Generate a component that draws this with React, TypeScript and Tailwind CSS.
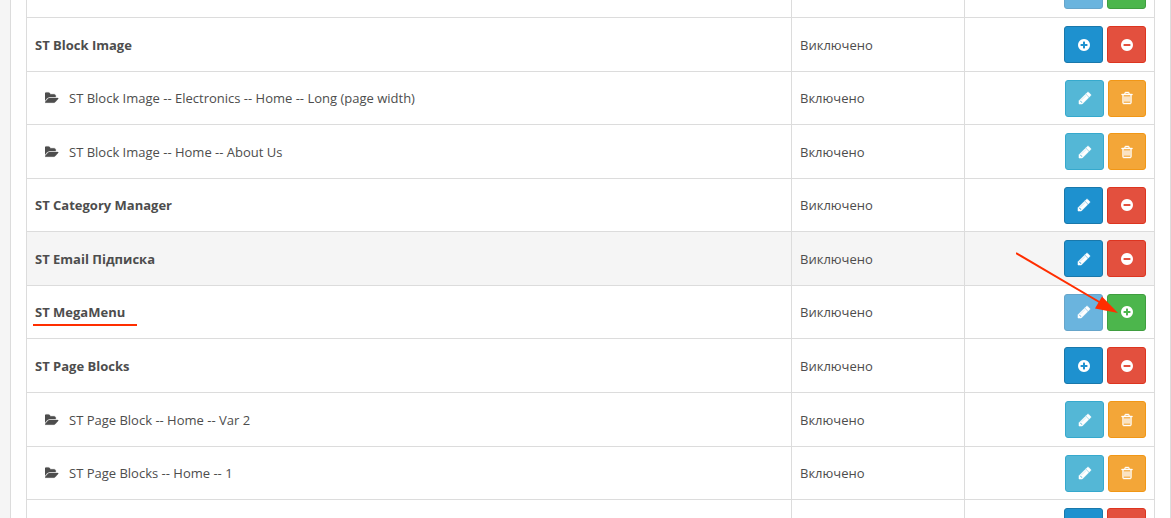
import React from "react";

const PLUS =
  "M1344 960v-128q0-26-19-45t-45-19h-256v-256q0-26-19-45t-45-19h-128q-26 0-45 19t-19 45v256h-256q-26 0-45 19t-19 45v128q0 26 19 45t45 19h256v256q0 26 19 45t45 19h128q26 0 45-19t19-45v-256h256q26 0 45-19t19-45zm320-64q0 209-103 385.5t-279.5 279.5-385.5 103-385.5-103-279.5-279.5-103-385.5 103-385.5 279.5-279.5 385.5-103 385.5 103 279.5 279.5 103 385.5z";
const MINUS =
  "M1344 960v-128q0-26-19-45t-45-19h-768q-26 0-45 19t-19 45v128q0 26 19 45t45 19h768q26 0 45-19t19-45zm320-64q0 209-103 385.5t-279.5 279.5-385.5 103-385.5-103-279.5-279.5-103-385.5 103-385.5 279.5-279.5 385.5-103 385.5 103 279.5 279.5 103 385.5z";
const PENCIL =
  "M491 1536l91-91-235-235-91 91v107h128v128h107zm523-928q0-22-22-22-10 0-17 7l-542 542q-7 7-7 17 0 22 22 22 10 0 17-7l542-542q7-7 7-17zm-54-192l416 416-832 832h-416v-416zm683 96q0 53-37 90l-166 166-416-416 166-165q36-38 90-38 53 0 91 38l235 234q37 39 37 91z";
const TRASH =
  "M704 736v576q0 14-9 23t-23 9h-64q-14 0-23-9t-9-23v-576q0-14 9-23t23-9h64q14 0 23 9t9 23zm256 0v576q0 14-9 23t-23 9h-64q-14 0-23-9t-9-23v-576q0-14 9-23t23-9h64q14 0 23 9t9 23zm256 0v576q0 14-9 23t-23 9h-64q-14 0-23-9t-9-23v-576q0-14 9-23t23-9h64q14 0 23 9t9 23zm128 724v-948h-896v948q0 22 7 40.5t14.5 27 10.5 8.5h832q3 0 10.5-8.5t14.5-27 7-40.5zm-672-1076h448l-48-117q-7-9-17-11h-317q-10 2-17 11zm928 32v64q0 14-9 23t-23 9h-96v948q0 83-47 143.5t-113 60.5h-832q-66 0-113-58.5t-47-141.5v-952h-96q-14 0-23-9t-9-23v-64q0-14 9-23t23-9h309l70-167q15-37 54-63t79-26h320q40 0 79 26t54 63l70 167h309q14 0 23 9t9 23z";
const FOLDER =
  "M1815 952q0 31-31 66l-336 396q-43 51-120.5 86.5t-143.5 35.5h-1088q-34 0-60.5-13t-26.5-43q0-31 31-66l336-396q43-51 120.5-86.5t143.5-35.5h1088q34 0 60.5 13t26.5 43zm-343-344v160h-832q-94 0-197 47.5t-164 119.5l-337 396-5 6q0-4-.5-12.5t-.5-12.5v-960q0-92 66-158t158-66h320q92 0 158 66t66 158v32h544q92 0 158 66t66 158z";

const KINDS = {
  add: { label: "Додати", path: PLUS, weight: 0, style: "w-[39px] bg-[#1e91cf] border-[#1978ab]" },
  edit: { label: "Редагувати", path: PENCIL, weight: 70, style: "w-[39px] bg-[#1e91cf] border-[#1978ab]" },
  editOff: { label: "Редагувати", path: PENCIL, weight: 70, style: "w-[39px] bg-[#6ab4de] border-[#67a5ca]" },
  editModule: { label: "Редагувати", path: PENCIL, weight: 70, style: "w-[39px] bg-[#54b7d6] border-[#36a9cd]" },
  uninstall: { label: "Вимкнути", path: MINUS, weight: 0, style: "w-[39px] bg-[#e3503e] border-[#dd3520]" },
  install: { label: "Увімкнути", path: PLUS, weight: 0, style: "w-[39px] bg-[#4cb64c] border-[#409e40]" },
  remove: { label: "Видалити", path: TRASH, weight: 50, style: "w-[38px] bg-[#f3a638] border-[#f19716]" },
};

type Kind = keyof typeof KINDS;

interface Row {
  name: string;
  status: string;
  child?: boolean;
  tall?: boolean;
  hovered?: boolean;
  marked?: boolean;
  actions: Kind[];
}

const ROWS: Row[] = [
  { name: "", status: "", tall: true, actions: ["editOff", "install"] },
  { name: "ST Block Image", status: "Виключено", tall: true, actions: ["add", "uninstall"] },
  { name: "ST Block Image -- Electronics -- Home -- Long (page width)", status: "Включено", child: true, actions: ["editModule", "remove"] },
  { name: "ST Block Image -- Home -- About Us", status: "Включено", child: true, tall: true, actions: ["editModule", "remove"] },
  { name: "ST Category Manager", status: "Виключено", actions: ["edit", "uninstall"] },
  { name: "ST Email Підписка", status: "Виключено", tall: true, hovered: true, actions: ["edit", "uninstall"] },
  { name: "ST MegaMenu", status: "Виключено", marked: true, actions: ["editOff", "install"] },
  { name: "ST Page Blocks", status: "Виключено", tall: true, actions: ["add", "uninstall"] },
  { name: "ST Page Block -- Home -- Var 2", status: "Включено", child: true, tall: true, actions: ["editModule", "remove"] },
  { name: "ST Page Blocks -- Home -- 1", status: "Включено", child: true, actions: ["editModule", "remove"] },
  { name: "", status: "", tall: true, actions: ["add", "uninstall"] },
];

function ActionButton({ kind }: { kind: Kind }) {
  const { label, path, weight, style } = KINDS[kind];
  return (
    <button
      type="button"
      aria-label={label}
      disabled={kind === "editOff"}
      className={`flex h-[37px] items-center justify-center rounded-[3px] border text-white ${style}`}
    >
      <svg viewBox="0 0 1792 1792" className="size-[14px]" fill="currentColor" aria-hidden="true">
        <path d={path} stroke="currentColor" strokeWidth={weight} />
      </svg>
    </button>
  );
}

function Arrow() {
  return (
    <svg
      viewBox="0 0 104 64"
      className="pointer-events-none absolute right-[26px] bottom-[16px] h-[64px] w-[104px]"
      aria-hidden="true"
    >
      <path d="M0 2L85 52" stroke="#ff2e00" strokeWidth="2" fill="none" />
      <path d="M102 62L86 45.500L79 57.500Z" fill="#ff2e00" />
    </svg>
  );
}

export default function App() {
  return (
    <div className="h-screen overflow-hidden bg-[#f5f5f5] pl-[10px] font-['Open_Sans','Noto_Sans',sans-serif] text-[13px] leading-[18px]">
      <main className="h-full overflow-hidden border-x border-[#dcdcdc] bg-white px-[15px] text-[#4d4d4d]">
        <table className="-mt-[37px] w-full table-fixed border-collapse">
          <colgroup>
            <col />
            <col className="w-[173px]" />
            <col className="w-[190px]" />
          </colgroup>
          <tbody>
            {ROWS.map((row, i) => (
              <tr
                key={i}
                className={`${row.tall ? "h-[54px]" : "h-[53px]"} ${row.hovered ? "bg-[#f5f5f5]" : ""}`}
              >
                <td className="border border-[#dcdcdc] px-2 py-0">
                  {row.child ? (
                    <div className="flex items-center gap-[10px] pl-[10px]">
                      <svg viewBox="0 0 1920 1792" className="h-[14px] w-[14px]" fill="currentColor" aria-hidden="true">
                        <path d={FOLDER} stroke="currentColor" strokeWidth="40" />
                      </svg>
                      <span>{row.name}</span>
                    </div>
                  ) : (
                    <b className="relative font-bold">
                      {row.name}
                      {row.marked && (
                        <span className="absolute top-[21px] -left-[2px] h-[2px] w-[104px] bg-[#ff2e00]" />
                      )}
                    </b>
                  )}
                </td>
                <td className="border border-[#dcdcdc] px-2 py-0">{row.status}</td>
                <td className="border border-[#dcdcdc] px-2 py-0">
                  <div className="relative flex justify-end gap-1">
                    {row.actions.map((kind) => (
                      <ActionButton key={kind} kind={kind} />
                    ))}
                    {row.marked && <Arrow />}
                  </div>
                </td>
              </tr>
            ))}
          </tbody>
        </table>
      </main>
    </div>
  );
}
